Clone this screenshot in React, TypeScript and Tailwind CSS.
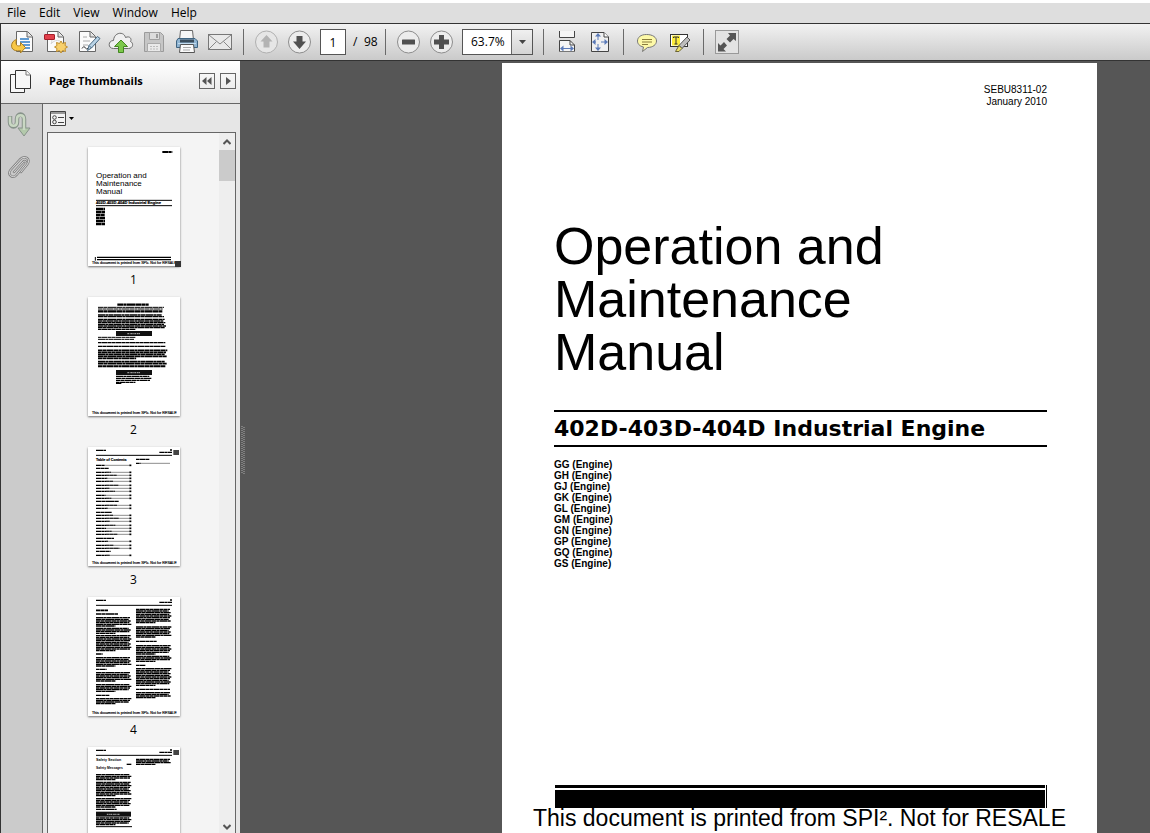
import React from "react";

type Children = { children: React.ReactNode };

const engines = ["GG", "GH", "GJ", "GK", "GL", "GM", "GN", "GP", "GQ", "GS"];
const watermark = "This document is printed from SPI². Not for RESALE";

const ToolIcon = ({ children }: Children) => (
  <svg width="33" height="36" viewBox="0 0 33 36" fill="none" aria-hidden="true">
    {children}
  </svg>
);

const ToolButton = ({ label, children }: Children & { label: string }) => (
  <button type="button" aria-label={label} title={label} className="h-9 w-[33px] shrink-0">
    <ToolIcon>{children}</ToolIcon>
  </button>
);

const Divider = () => <div className="h-[26px] w-px shrink-0 bg-[#6a6a6a]" />;

const SheetOutline = ({ x = 10, y = 7 }: { x?: number; y?: number }) => (
  <g transform={`translate(${x} ${y})`}>
    <path d="M.5.5H11.5L16.5 5.5V20.5H.5Z" fill="#fbfbfb" stroke="#666" />
    <path d="M11 1V6H16" fill="#e2e2e2" stroke="#666" />
  </g>
);

const FileTools = () => (
  <div className="flex">
    <ToolButton label="Open">
      <SheetOutline x={11} />
      <path d="M15 15H24M15 18H25M15 21H25M18 24H25" stroke="#2f7cc4" strokeWidth="1.4" />
      <path d="M11.5 15.5C6 17 5 24 9 26C11 27 14 27 15.500 26.500V29L20.500 23.500L15.500 18.500V21.500C12 23 10 20.500 11.500 15.500Z" fill="#f9c846" stroke="#a97e25" />
    </ToolButton>
    <ToolButton label="Create PDF">
      <SheetOutline x={9} />
      <path d="M13 14Q15 17 13 20Q17 15 22 17" stroke="#d8d8d8" />
      <rect x="6.500" y="10.500" width="10" height="5" rx=".5" fill="#e2404b" stroke="#a51e2a" />
      <path d="M23 17L24.500 19.500L27.500 18.500L27 21.500L29.500 23L27 24.500L27.500 27.500L24.500 26.500L23 29L21.500 26.500L18.500 27.500L19 24.500L16.500 23L19 21.500L18.500 18.500L21.500 19.500Z" fill="#f8d06b" stroke="#c08f2e" />
    </ToolButton>
    <ToolButton label="Sign">
      <SheetOutline x={8} />
      <path d="M12 13H16M12 17H19M12 21H17" stroke="#aaa" />
      <path d="M11 24.500Q13 21 14 23.500T18 24" stroke="#333" />
      <path d="M16.500 26.500L18 21.500L26.500 12.500L29 14.500L20.500 24Z" fill="#b9d3e6" stroke="#48677f" />
      <path d="M18 21.500L20.500 24" stroke="#48677f" />
    </ToolButton>
    <ToolButton label="Upload">
      <path d="M9.500 24.500C3.500 24.500 4 16.500 9.500 16.500C10 8 20 7 21.500 13.500C26 11.500 28 15 26.500 17.500C30 19 29 24.500 24.500 24.500Z" fill="#f0f0f0" stroke="#6c6c6c" />
      <path d="M17 16L23.500 22.500H19.500V28.500H14.500V22.500H10.500Z" fill="#7cc84b" stroke="#438621" />
    </ToolButton>
    <ToolButton label="Save">
      <path d="M7.500 8.500H23.500L26.500 11.500V27.500H7.500Z" fill="#c6c6c6" stroke="#9b9b9b" />
      <path d="M12.500 8.500H22.500V15.500H12.500Z" fill="#dcdcdc" stroke="#a0a0a0" />
      <path d="M19 10H21V14H19Z" fill="#9c9c9c" />
      <path d="M10.500 19.500H23.500V27.500H10.500Z" fill="#e9e9e9" stroke="#aaa" />
      <path d="M13 22.500H21M13 25H21" stroke="#bbb" strokeDasharray="2 1" />
    </ToolButton>
    <ToolButton label="Print">
      <path d="M10.500 6.500H22.500L23.500 16H9.500Z" fill="#f6f6f6" stroke="#666" />
      <path d="M8 14.500H25L27.500 17V23.500H6.500V17Z" fill="#8fb4d2" stroke="#3f6481" />
      <path d="M10 15.500H24V18.500H10Z" fill="#3b4d5c" />
      <path d="M8 19.500H26" stroke="#c3dcee" />
      <path d="M10.500 20.500H23.500L24.500 28.500H9.500Z" fill="#fafafa" stroke="#555" />
      <path d="M13 23.500H21M13 26H20" stroke="#aaa" />
    </ToolButton>
    <ToolButton label="Email">
      <rect x="5.500" y="10.500" width="23" height="15" fill="#e9e9e9" stroke="#777" />
      <path d="M6 11L17 20L28 11M6 25L13.500 17.500M28 25L20.500 17.500" stroke="#888" />
    </ToolButton>
  </div>
);

const Toolbar = () => (
  <div role="toolbar" className="flex h-9 shrink-0 items-center bg-linear-to-b from-[#f2f2f2] to-[#cacaca] pl-1 text-xs">
    <FileTools />
    <div className="ml-[7px] mr-1.5 flex">
      <Divider />
    </div>
    <ToolButton label="Previous page">
      <circle cx="16.500" cy="18" r="11" fill="#e6e6e6" stroke="#b0b0b0" />
      <path d="M16.500 11L22.500 17.500H19.500V23.500H13.500V17.500H10.500Z" fill="#b3b3b3" />
    </ToolButton>
    <ToolButton label="Next page">
      <circle cx="16.500" cy="18" r="11" fill="#ececec" stroke="#8c8c8c" />
      <path d="M16.500 25L10 17.500H13.500V12H19.500V17.500H23Z" fill="#505050" />
    </ToolButton>
    <input
      aria-label="Page number"
      defaultValue="1"
      className="ml-1 h-[26px] w-[26px] rounded-none border border-[#555] bg-white text-center"
    />
    <span className="ml-[7px] w-[11px]">/</span>
    <span className="w-[21px]">98</span>
    <Divider />
    <div className="ml-[6px] flex">
      <ToolButton label="Zoom out">
        <circle cx="16.500" cy="18" r="11" fill="#ececec" stroke="#8c8c8c" />
        <rect x="10" y="15.500" width="13" height="5" rx=".5" fill="#505050" />
      </ToolButton>
      <ToolButton label="Zoom in">
        <circle cx="16.500" cy="18" r="11" fill="#ececec" stroke="#8c8c8c" />
        <path d="M14 11H19V15.500H24V20.500H19V25H14V20.500H9V15.500H14Z" fill="#505050" />
      </ToolButton>
    </div>
    <div className="relative ml-1 mr-[10px] h-[26px] w-[71px]">
      <select
        aria-label="Zoom level"
        defaultValue="63.7%"
        className="h-full w-full appearance-none rounded-none border border-[#555] bg-white pl-2"
      >
        <option>63.7%</option>
        <option>100%</option>
      </select>
      <span className="pointer-events-none absolute inset-y-px right-px flex w-[21px] items-center justify-center border-l border-[#666] bg-linear-to-b from-[#f0f0f0] to-[#d4d4d4]">
        <svg width="7" height="4" viewBox="0 0 7 4" aria-hidden="true">
          <path d="M0 0H7L3.500 4Z" fill="#444" />
        </svg>
      </span>
    </div>
    <Divider />
    <div className="ml-[6px] mr-[7px] flex">
      <ToolButton label="Fit width">
        <path d="M9.500 7V13.500H24.500V7" fill="#f5f5f5" stroke="#444" />
        <path d="M9.500 28V16.500H20L24.500 21V28" fill="#f5f5f5" stroke="#444" />
        <path d="M20 16.500V21H24.500" stroke="#444" />
        <path d="M11 24.500H23" stroke="#5b7ab8" />
        <path d="M10 24.500L13.500 21.500V27.500ZM24 24.500L20.500 21.500V27.500Z" fill="#5b7ab8" />
        <path d="M9 27.500H25" stroke="#777" />
      </ToolButton>
      <ToolButton label="Fit page">
        <path d="M8.500 8.500H21L25.500 13V27.500H8.500Z" fill="#f0f0f0" stroke="#444" />
        <path d="M21 8.500V13H25.500" fill="#fff" stroke="#444" />
        <path d="M15 10V16M15 20V26M10 18H13M18 18H24" stroke="#5b7ab8" />
        <path d="M15 9L18 12.500H12ZM15 27L18 23.500H12ZM9 18L12.500 15V21ZM25 18L21.500 15V21Z" fill="#5b7ab8" />
      </ToolButton>
    </div>
    <Divider />
    <div className="ml-[6px] mr-[7px] flex">
      <ToolButton label="Add sticky note">
        <path d="M16.500 10.500C23 10.500 26.500 13.500 26.500 17C26.500 20.500 23 23.500 17.500 23.500L12.500 27.500L13.500 23C9 22 7.500 19.500 7.500 17C7.500 13.500 10.500 10.500 16.500 10.500Z" fill="#fdf9a8" stroke="#777" />
        <path d="M12 15.500H22M12 18H22M12 20.500H18" stroke="#8a7d3c" />
      </ToolButton>
      <ToolButton label="Highlight text">
        <rect x="7.500" y="10.500" width="17" height="12" fill="#fff" stroke="#333" />
        <rect x="9" y="11.500" width="8" height="10" fill="#ffee3b" />
        <path d="M10.500 14V13H15.500V14M13 13V20M11.500 20H14.500" stroke="#333" />
        <path d="M16 21.500L24 13L27 16L19 24.500Z" fill="#bdbdbd" stroke="#555" />
        <path d="M16 21.500L19 24.500L16 27.500H12.500Z" fill="#efe26a" stroke="#6b6433" />
      </ToolButton>
    </div>
    <Divider />
    <div className="ml-[7px] flex">
      <ToolButton label="Full screen">
        <rect x="4.500" y="6.500" width="23" height="23" fill="#e3e3e3" stroke="#999" />
        <path d="M17 9H25V17L22.500 15L19 18.500L15.500 15L19 11.500ZM7 19L9.500 21.500L13 18L16 21.500L12.500 25L15 27.500H7Z" fill="#555" />
      </ToolButton>
    </div>
  </div>
);

type Block = { x: number; y: number; w: number; n: number; pitch?: number; thick?: number };

const dashes = ["14 1 9 1 21 1", "9 1 18 1 12 1", "23 1 7 1 15 1", "17 1 10 1 25 1"];

// Greeked paragraphs for the thumbnails, the last line of each is cut short
const Greek = ({ blocks }: { blocks: Block[] }) => (
  <g stroke="#000">
    {blocks.map(({ x, y, w, n, pitch = 5, thick = 4 }) =>
      Array.from({ length: n }, (_, i) => {
        const last = i === n - 1 && n > 2;
        const cut = w < 60 ? 0 : last ? w * 0.45 : ((i * 7 + y) % 5) * 2;
        return (
          <line
            key={`${x}-${y}-${i}`}
            x1={x}
            x2={x + w - cut}
            y1={y + i * pitch}
            y2={y + i * pitch}
            strokeWidth={thick}
            strokeDasharray={dashes[(i + y) % 4]}
          />
        );
      })
    )}
  </g>
);

const Banner = ({ x, y, w }: { x: number; y: number; w: number }) => (
  <g>
    <rect x={x} y={y} width={w} height="15" fill="#111" />
    <path d={`M${x + w / 2 - 20} ${y + 8}h40`} stroke="#999" strokeWidth="4" strokeDasharray="5 2 3 1" />
  </g>
);

const CoverThumb = () => (
  <>
    <Greek blocks={[{ x: 223, y: 15, w: 30, n: 1, thick: 6 }, { x: 24, y: 186, w: 27, n: 6, pitch: 9, thick: 7 }]} />
    <g fontSize="24">
      <text x="24" y="93">Operation and</text>
      <text x="24" y="117">Maintenance</text>
      <text x="24" y="141">Manual</text>
    </g>
    <path d="M24 160H252M24 176H252" stroke="#000" strokeWidth="3" />
    <text x="24" y="172" fontSize="12" fontWeight="bold" stroke="#000" strokeWidth=".5">402D-403D-404D Industrial Engine</text>
    <path d="M27 331H249M27 338H249" stroke="#000" strokeWidth="4" />
    <path d="M22 330V341" stroke="#000" strokeWidth="3" />
  </>
);

const SafetyThumb = () => (
  <>
    <Greek
      blocks={[
        { x: 88, y: 23, w: 100, n: 1, thick: 7 },
        { x: 30, y: 31, w: 200, n: 2, thick: 3 },
        { x: 30, y: 43, w: 200, n: 1, thick: 7 },
        { x: 30, y: 54, w: 200, n: 2 },
        { x: 30, y: 67, w: 204, n: 7 },
        { x: 30, y: 121, w: 114, n: 2, pitch: 6, thick: 3 },
        { x: 30, y: 137, w: 206, n: 1 },
        { x: 30, y: 148, w: 208, n: 1 },
        { x: 30, y: 160, w: 208, n: 5, pitch: 6, thick: 5 },
        { x: 30, y: 194, w: 208, n: 2, pitch: 6, thick: 5 },
        { x: 30, y: 208, w: 208, n: 1, thick: 6 },
        { x: 84, y: 238, w: 106, n: 4, pitch: 6 },
        { x: 84, y: 259, w: 16, n: 1 },
      ]}
    />
    <Banner x={84} y={102} w={108} />
    <Banner x={84} y={219} w={108} />
  </>
);

const PageHead = ({ tab }: { tab?: boolean }) => (
  <>
    <Greek blocks={[{ x: 24, y: 10, w: 30, n: 1 }, { x: 214, y: 16, w: 38, n: 1 }, { x: 246, y: 9, w: 6, n: 1 }]} />
    <path d="M24 25H252" stroke="#000" strokeWidth="3" />
    {tab && <rect x="256" y="9" width="17" height="15" fill="#444" />}
  </>
);

const contents = [55, 76, 85, 94, 103, 115, 124, 133, 145, 154, 175, 184, 205, 214, 223, 235, 244, 253, 262, 283, 295, 304, 325];

const ContentsThumb = () => (
  <>
    <PageHead tab />
    <text x="24" y="43" fontSize="11" fontWeight="bold" stroke="#000" strokeWidth=".5">Table of Contents</text>
    <Greek
      blocks={[
        { x: 24, y: 64, w: 38, n: 1 },
        { x: 24, y: 163, w: 74, n: 1 },
        { x: 24, y: 196, w: 48, n: 1 },
        { x: 24, y: 274, w: 54, n: 1 },
        { x: 24, y: 313, w: 44, n: 1 },
        { x: 144, y: 37, w: 40, n: 1 },
        { x: 144, y: 49, w: 14, n: 1 },
      ]}
    />
    <path d="M158 49H246" stroke="#555" strokeWidth="2" />
    {contents.map((y, i) => (
      <g key={y} stroke="#000" strokeWidth="4">
        <path d={`M24 ${y}H${52 + ((i * 17) % 45)}`} strokeDasharray="15 1 9 1" />
        <path d={`M54 ${y}H124`} stroke="#555" strokeWidth="2" />
        <path d={`M124 ${y}H130`} strokeWidth="5" />
      </g>
    ))}
  </>
);

const ForewordThumb = () => (
  <>
    <PageHead />
    <Greek
      blocks={[
        { x: 24, y: 40, w: 36, n: 1, thick: 5 },
        { x: 24, y: 51, w: 68, n: 1 },
        { x: 24, y: 62, w: 106, n: 6 },
        { x: 24, y: 94, w: 106, n: 4 },
        { x: 24, y: 116, w: 106, n: 10 },
        { x: 24, y: 171, w: 20, n: 1 },
        { x: 24, y: 182, w: 106, n: 6 },
        { x: 24, y: 217, w: 32, n: 1 },
        { x: 24, y: 227, w: 106, n: 6 },
        { x: 24, y: 263, w: 106, n: 5 },
        { x: 24, y: 295, w: 40, n: 1 },
        { x: 24, y: 305, w: 106, n: 4 },
        { x: 144, y: 37, w: 106, n: 9 },
        { x: 144, y: 90, w: 106, n: 7 },
        { x: 144, y: 133, w: 68, n: 1 },
        { x: 144, y: 146, w: 106, n: 6 },
        { x: 144, y: 178, w: 106, n: 4 },
        { x: 144, y: 205, w: 28, n: 1 },
        { x: 144, y: 215, w: 106, n: 11 },
        { x: 144, y: 277, w: 106, n: 1 },
        { x: 144, y: 287, w: 106, n: 4 },
      ]}
    />
  </>
);

const SectionThumb = () => (
  <>
    <PageHead tab />
    <text x="24" y="43" fontSize="11" fontWeight="bold">Safety Section</text>
    <text x="24" y="65" fontSize="10" fontWeight="bold">Safety Messages</text>
    <Greek
      blocks={[
        { x: 116, y: 52, w: 14, n: 1 },
        { x: 144, y: 37, w: 106, n: 4 },
        { x: 24, y: 83, w: 106, n: 4 },
        { x: 24, y: 106, w: 106, n: 9 },
        { x: 24, y: 155, w: 106, n: 6 },
        { x: 24, y: 187, w: 66, n: 1 },
        { x: 24, y: 213, w: 106, n: 5 },
      ]}
    />
    <Banner x={24} y={194} w={105} />
    <path d="M24 239H132" stroke="#000" strokeWidth="3" />
  </>
);

const thumbs = [
  { Thumb: CoverThumb, page: 1 },
  { Thumb: SafetyThumb, page: 2 },
  { Thumb: ContentsThumb, page: 3 },
  { Thumb: ForewordThumb, page: 4 },
  { Thumb: SectionThumb },
];

const ThumbnailList = () => (
  <ol className="min-w-0 flex-1 overflow-hidden pt-3.5">
    {thumbs.map(({ Thumb, page }, i) => (
      <li key={i}>
        <a href={`#page-${i + 1}`} className="flex flex-col items-center pb-[3px]">
          <svg
            width="92"
            height="119"
            viewBox="0 0 276 357"
            overflow="visible"
            aria-hidden="true"
            className="shrink-0 bg-white font-['Liberation_Sans',sans-serif] shadow-[0_1px_2px_rgba(0,0,0,0.55)]"
          >
            <Thumb />
            {page && (
              <text x="12" y="351" fontSize="11" stroke="#000" strokeWidth=".5">{watermark}</text>
            )}
            {page === 1 && <rect x="261" y="342" width="18" height="18" fill="#333" />}
          </svg>
          {page && <span className="text-xs leading-7">{page}</span>}
        </a>
      </li>
    ))}
  </ol>
);

const Sidebar = () => (
  <aside className="flex w-60 shrink-0 flex-col border-l border-[#333] bg-[#e6e6e6]">
    <header className="flex h-[43px] shrink-0 items-center border-b border-[#666] bg-linear-to-b from-white to-[#e4e4e4] pr-1 pb-0.5">
      <button type="button" aria-label="Page thumbnails" className="flex w-[38px] justify-center">
        <svg width="23" height="25" viewBox="0 0 23 25" fill="#f7f7f7" stroke="#333" aria-hidden="true">
          <path d="M1.500 5.500H15.500V23.500H1.500Z" />
          <path d="M6.500 1.500H17L21.500 6V19.500H6.500Z" />
          <path d="M17 1.500V6H21.500" stroke="#777" />
        </svg>
      </button>
      <h2 className="flex-1 pl-[10px] text-[11px] font-bold">Page Thumbnails</h2>
      <button type="button" aria-label="Collapse panel" className="mr-[5px] flex size-4 items-center justify-center border border-[#666]">
        <svg width="10" height="8" viewBox="0 0 10 8" fill="#555" aria-hidden="true">
          <path d="M4.500 0V8L0 4ZM9.500 0V8L5 4Z" />
        </svg>
      </button>
      <button type="button" aria-label="Expand panel" className="flex size-4 items-center justify-center border border-[#666]">
        <svg width="5" height="8" viewBox="0 0 5 8" fill="#555" aria-hidden="true">
          <path d="M0 0L5 4L0 8Z" />
        </svg>
      </button>
    </header>
    <div className="flex min-h-0 flex-1">
      <nav className="flex w-[42px] shrink-0 flex-col items-center gap-[17px] border-r border-[#666] bg-[#cbcbcb] pt-2 pr-1.5">
        <button type="button" aria-label="Signatures">
          <svg width="24" height="26" viewBox="0 0 24 26" fill="none" aria-hidden="true">
            <path d="M3 4V10C3 16 10 16 10 10V7C10 1 17 1 17 7V18" stroke="#87938a" strokeWidth="4.500" />
            <path d="M11 16H23L17 24Z" fill="#b3c9ab" stroke="#87938a" />
            <path d="M3 4.500V10C3 15 10 15 10 10V7C10 2 17 2 17 7V18" stroke="#c9d8c3" strokeWidth="2.500" />
          </svg>
        </button>
        <button type="button" aria-label="Attachments">
          <svg width="24" height="26" viewBox="0 0 24 26" fill="none" strokeLinecap="round" aria-hidden="true">
            <path d="M7 17L16 7C18 5 20 7 18.500 9L9.500 20C6 24 0 20 3.500 15L13.500 4C18 0 24 4 20.500 9L14 17" stroke="#858585" strokeWidth="2.500" />
            <path d="M7 17L16 7C18 5 20 7 18.500 9L9.500 20C6 24 0 20 3.500 15L13.500 4C18 0 24 4 20.500 9L14 17" stroke="#d8d8d8" />
          </svg>
        </button>
      </nav>
      <div className="flex min-w-0 flex-1 flex-col px-1">
        <button type="button" aria-label="Options" className="ml-[3px] flex h-7 shrink-0 items-center gap-[3px]">
          <svg width="16" height="15" viewBox="0 0 16 15" fill="#f4f4f4" stroke="#444" aria-hidden="true">
            <path d="M.5.5H15.500V14.500H.5Z" />
            <path d="M1 2H15" stroke="#999" strokeWidth="2" />
            <circle cx="4.500" cy="6.500" r="1.800" />
            <circle cx="4.500" cy="11" r="1.800" />
            <path d="M8 6.500H14M8 11.500H14" />
          </svg>
          <svg width="5" height="3" viewBox="0 0 5 3" aria-hidden="true">
            <path d="M0 0H5L2.500 3Z" />
          </svg>
        </button>
        <div className="flex min-h-0 flex-1 border border-b-0 border-[#666] bg-[#f4f4f4]">
          <ThumbnailList />
          <div className="flex w-4 shrink-0 flex-col bg-[#eee]">
            <button type="button" aria-label="Scroll up" className="flex h-[17px] items-center justify-center">
              <svg width="8" height="6" viewBox="0 0 8 6" fill="none" stroke="#555" strokeWidth="2" aria-hidden="true">
                <path d="M.5 5L4 1.500L7.500 5" />
              </svg>
            </button>
            <div className="h-[31px] bg-[#cbcbcb]" />
            <button type="button" aria-label="Scroll down" className="mt-auto flex h-3 items-center justify-center">
              <svg width="8" height="6" viewBox="0 0 8 6" fill="none" stroke="#555" strokeWidth="2" aria-hidden="true">
                <path d="M.5 1L4 4.500L7.500 1" />
              </svg>
            </button>
          </div>
        </div>
      </div>
    </div>
  </aside>
);

const DocumentPage = () => (
  <article id="page-1" className="min-w-0 flex-1 bg-white font-['Liberation_Sans',sans-serif]">
    <div className="pl-[52px] pr-[50px] pt-[21px]">
      <p className="text-right text-[10px] leading-3">
        SEBU8311-02
        <br />
        January 2010
      </p>
      <h1 className="mt-[112px] text-[52px] leading-[53px]">
        Operation and
        <br />
        Maintenance
        <br />
        Manual
      </h1>
      <h2 className="mt-[31px] border-y-2 border-black font-['DejaVu_Sans',sans-serif] text-[22px] font-bold leading-[33px]">
        402D-403D-404D Industrial Engine
      </h2>
      <ul className="mt-3 text-[10px] font-bold leading-[11px]">
        {engines.map((code) => (
          <li key={code}>{code} (Engine)</li>
        ))}
      </ul>
      <div className="mt-[216px] flex gap-px pl-px">
        <div className="flex-1">
          <div className="h-[3px] bg-black" />
          <div className="mt-0.5 h-[18px] bg-black" />
        </div>
        <div className="w-px bg-black" />
      </div>
    </div>
    <p className="whitespace-nowrap text-center text-[23px] leading-5">{watermark}</p>
  </article>
);

const App = () => {
  return (
    <div className="flex h-screen flex-col overflow-hidden bg-[#565656] font-['Open_Sans',sans-serif] text-black">
      <nav className="flex h-[23px] shrink-0 items-center gap-[13px] border-t-3 border-white bg-[#dedede] pl-[7px] text-xs">
        {["File", "Edit", "View", "Window", "Help"].map((item) => (
          <button key={item} type="button">
            {item}
          </button>
        ))}
      </nav>
      <div className="shrink-0 border-y border-l border-[#333]">
        <Toolbar />
      </div>
      <div className="flex min-h-0 flex-1">
        <Sidebar />
        <main className="flex min-w-0 flex-1 pt-0.5">
          <div className="flex w-[262px] shrink-0 items-start pt-[363px] pl-px">
            <svg width="4" height="48" aria-hidden="true">
              <path d="M1 0V48M3 1V48" stroke="#aaa" strokeDasharray="1 1" />
            </svg>
          </div>
          <DocumentPage />
          <div className="w-[53px] shrink-0" />
        </main>
      </div>
    </div>
  );
};

export default App;
